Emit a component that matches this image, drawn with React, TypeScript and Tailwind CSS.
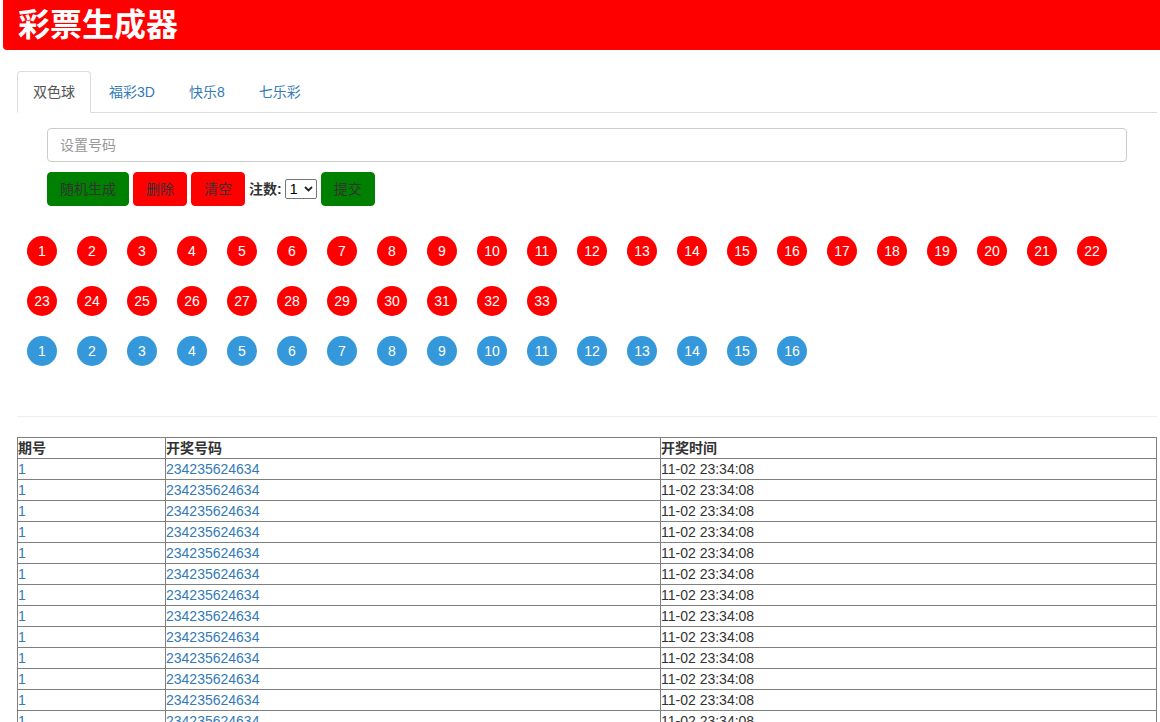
import React from "react";

const FONT = '"Liberation Sans", Arial, "Noto Sans CJK SC", sans-serif';

function Ball({ n, color }: { n: number; color: "red" | "blue" }) {
  return (
    <div
      className={
        "m-[10px] flex h-[30px] w-[30px] items-center justify-center rounded-full text-[14px] leading-none text-white " +
        (color === "red" ? "bg-[#ff0000]" : "bg-[#3498db]")
      }
    >
      {n}
    </div>
  );
}

export default function App() {
  const reds = Array.from({ length: 33 }, (_, i) => i + 1);
  const blues = Array.from({ length: 16 }, (_, i) => i + 1);
  const rows = Array.from({ length: 14 }, (_, i) => i);
  return (
    <div className="min-h-[722px] bg-white text-[14px] leading-[20px] text-[#333]" style={{ fontFamily: FONT }}>
      <div className="ml-[3px] flex h-[50px] items-center rounded-bl-[4px] bg-[#ff0000] pl-[15px]">
        <h1 className="text-[32px] font-bold leading-none text-white">彩票生成器</h1>
      </div>

      <div className="mx-[17px] mt-[21px] w-[1140px]">
        <ul className="flex h-[42px] border-b border-[#ddd]">
          <li className="mr-[2px] h-[42px] rounded-t-[4px] border border-[#ddd] border-b-white bg-white px-[15px] py-[10px] text-[#555]">
            双色球
          </li>
          <li className="mr-[2px] h-[41px] border border-transparent px-[15px] py-[10px] text-[#337ab7]">福彩3D</li>
          <li className="mr-[2px] h-[41px] border border-transparent px-[15px] py-[10px] text-[#337ab7]">快乐8</li>
          <li className="mr-[2px] h-[41px] border border-transparent px-[15px] py-[10px] text-[#337ab7]">七乐彩</li>
        </ul>

        <div className="px-[30px] pt-[15px]">
          <div className="flex h-[34px] items-center rounded-[4px] border border-[#ccc] px-[12px] text-[#999]">
            设置号码
          </div>
          <div className="mt-[10px] flex items-center gap-[4px]">
            <div className="flex h-[34px] items-center rounded-[4px] border border-[#008000] bg-[#008000] px-[12px] text-[#333]">
              随机生成
            </div>
            <div className="flex h-[34px] items-center rounded-[4px] border border-[#ff0000] bg-[#ff0000] px-[12px] text-[#333]">
              删除
            </div>
            <div className="flex h-[34px] items-center rounded-[4px] border border-[#ff0000] bg-[#ff0000] px-[12px] text-[#333]">
              清空
            </div>
            <span className="mr-[-1px] font-bold text-[#333]">注数:</span>
            <div className="flex h-[20px] w-[32px] items-center justify-between rounded-[2px] border border-[#767676] bg-white pl-[4px] pr-[3px] text-[14px] text-black">
              <span>1</span>
              <svg width="9" height="6" viewBox="0 0 9 6">
                <path d="M1 1 L4.5 4.5 L8 1" fill="none" stroke="#222" strokeWidth="1.8" />
              </svg>
            </div>
            <div className="flex h-[34px] items-center rounded-[4px] border border-[#008000] bg-[#008000] px-[12px] text-[#333]">
              提交
            </div>
          </div>
        </div>

        <div className="mt-[20px] flex flex-wrap">
          {reds.map((n) => (
            <Ball key={"r" + n} n={n} color="red" />
          ))}
        </div>
        <div className="flex flex-wrap">
          {blues.map((n) => (
            <Ball key={"b" + n} n={n} color="blue" />
          ))}
        </div>

        <div className="mt-[40px] border-t border-[#eee]" />

        <table className="mt-[20px] w-[1140px] border-collapse border border-[#808080] text-left text-[14px] leading-[20px]">
          <thead>
            <tr>
              <th className="w-[148px] border border-[#808080] p-0 font-bold text-[#333]">期号</th>
              <th className="w-[495px] border border-[#808080] p-0 font-bold text-[#333]">开奖号码</th>
              <th className="border border-[#808080] p-0 font-bold text-[#333]">开奖时间</th>
            </tr>
          </thead>
          <tbody>
            {rows.map((i) => (
              <tr key={i}>
                <td className="border border-[#808080] p-0 text-[#337ab7]">1</td>
                <td className="border border-[#808080] p-0 text-[#337ab7]">234235624634</td>
                <td className="border border-[#808080] p-0 text-[#333]">11-02 23:34:08</td>
              </tr>
            ))}
          </tbody>
        </table>
      </div>
    </div>
  );
}
